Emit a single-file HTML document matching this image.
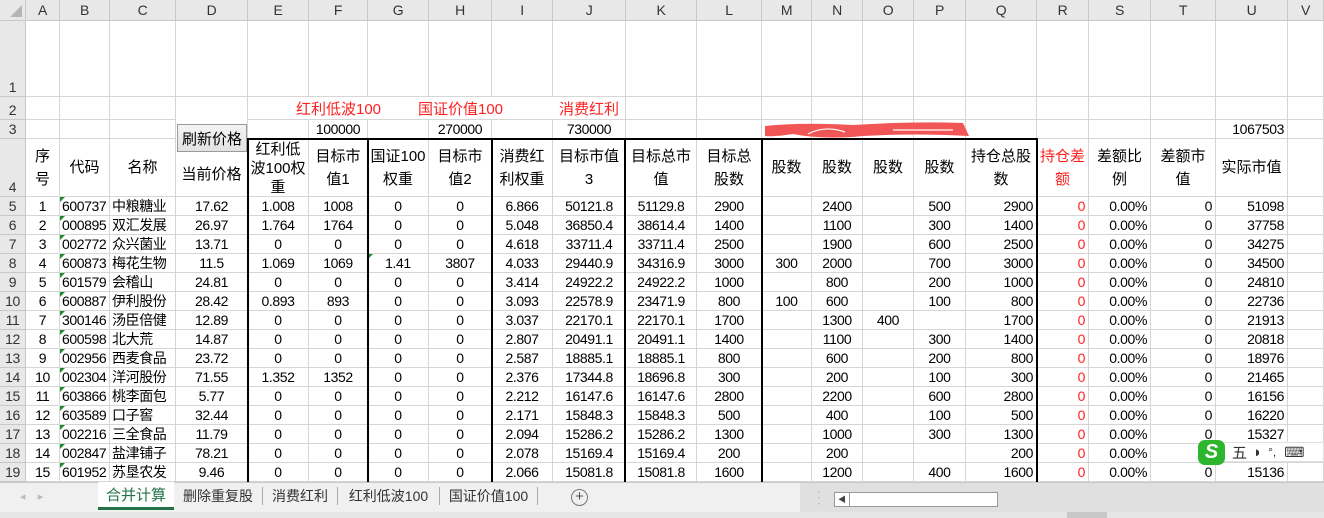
<!DOCTYPE html>
<html><head><meta charset="utf-8"><style>
*{box-sizing:border-box;margin:0;padding:0}
body{width:1324px;height:518px;overflow:hidden;background:#fff;font-family:"Liberation Sans","Noto Sans CJK SC",sans-serif;font-size:14px;color:#000;position:relative}
.g{display:grid;grid-template-columns:26px 34px 50px 66px 72px 61px 59px 61px 63px 61px 73px 71px 65px 50px 51px 51px 52px 71px 52px 62px 65px 72px 36px;grid-template-rows:21px 76px 23px 19px 58px repeat(15,19px);position:absolute;left:0;top:0}
.g>div{border-right:1px solid #d6d6d6;border-bottom:1px solid #d6d6d6;display:flex;align-items:center;justify-content:center;white-space:nowrap;overflow:hidden;letter-spacing:-0.4px;position:relative}
.g>div.ch{background:#e8e8e8;border-color:#c8c8c8;color:#333;font-size:14px}
.g>div.rh{background:#e8e8e8;border-color:#c8c8c8;color:#333;align-items:flex-end;padding-bottom:1px}
.g>div.l{justify-content:flex-start;padding-left:2px}
.g>div.r{justify-content:flex-end;padding-right:3px}
.red{color:#ff2020}
.g>div.w{text-align:center;line-height:23px;font-size:15px;letter-spacing:0}
.g>div.b{align-items:flex-end;padding-bottom:0px;font-size:15px;letter-spacing:0}
.tri:before{content:"";position:absolute;left:0;top:0;border-top:5px solid #1e8a2e;border-right:5px solid transparent}
.tk{position:absolute;background:#000}
</style></head><body>
<div class="g">
<div class="ch" style="background:#e8e8e8"><svg width="12" height="12" style="position:absolute;right:3px;bottom:3px"><path d="M12 0V12H0Z" fill="#b5b5b5"/></svg></div><div class="ch">A</div><div class="ch">B</div><div class="ch">C</div><div class="ch">D</div><div class="ch">E</div><div class="ch">F</div><div class="ch">G</div><div class="ch">H</div><div class="ch">I</div><div class="ch">J</div><div class="ch">K</div><div class="ch">L</div><div class="ch">M</div><div class="ch">N</div><div class="ch">O</div><div class="ch">P</div><div class="ch">Q</div><div class="ch">R</div><div class="ch">S</div><div class="ch">T</div><div class="ch">U</div><div class="ch">V</div>

<div class="rh">1</div><div></div><div></div><div></div><div></div><div></div><div></div><div></div><div></div><div></div><div></div><div></div><div></div><div></div><div></div><div></div><div></div><div></div><div></div><div></div><div></div><div></div><div></div>

<div class="rh">2</div><div></div><div></div><div></div><div style="border-bottom:none"></div><div style="border-right:none"></div><div class="red b" style="overflow:visible;border-right:none">红利低波100</div><div style="border-right:none"></div><div class="red b" style="overflow:visible;border-right:none">国证价值100</div><div style="border-right:none"></div><div class="red b">消费红利</div><div></div><div></div><div></div><div></div><div></div><div></div><div></div><div></div><div></div><div></div><div></div><div></div>

<div class="rh">3</div><div></div><div></div><div></div><div style="border-bottom:none"></div><div></div><div>100000</div><div></div><div>270000</div><div></div><div>730000</div><div></div><div></div><div></div><div></div><div></div><div></div><div></div><div></div><div></div><div></div><div class="r">1067503</div><div></div>

<div class="rh">4</div><div class="w">序<br>号</div><div class="w">代码</div><div class="w">名称</div><div class="w" style="padding-top:14px">当前价格</div><div class="w" style="line-height:19px;padding-top:2px">红利低<br>波100权<br>重</div><div class="w">目标市<br>值1</div><div class="w">国证100<br>权重</div><div class="w">目标市<br>值2</div><div class="w">消费红<br>利权重</div><div class="w">目标市值<br>3</div><div class="w">目标总市<br>值</div><div class="w">目标总<br>股数</div><div class="w">股数</div><div class="w">股数</div><div class="w">股数</div><div class="w">股数</div><div class="w">持仓总股<br>数</div><div class="w red">持仓差<br>额</div><div class="w">差额比<br>例</div><div class="w">差额市<br>值</div><div class="w">实际市值</div><div></div>

<div class="rh">5</div><div>1</div><div class="l tri">600737</div><div class="l">中粮糖业</div><div>17.62</div><div>1.008</div><div>1008</div><div>0</div><div>0</div><div>6.866</div><div>50121.8</div><div>51129.8</div><div>2900</div><div></div><div>2400</div><div></div><div>500</div><div class="r">2900</div><div class="r red">0</div><div class="r">0.00%</div><div class="r">0</div><div class="r">51098</div><div></div>
<div class="rh">6</div><div>2</div><div class="l tri">000895</div><div class="l">双汇发展</div><div>26.97</div><div>1.764</div><div>1764</div><div>0</div><div>0</div><div>5.048</div><div>36850.4</div><div>38614.4</div><div>1400</div><div></div><div>1100</div><div></div><div>300</div><div class="r">1400</div><div class="r red">0</div><div class="r">0.00%</div><div class="r">0</div><div class="r">37758</div><div></div>
<div class="rh">7</div><div>3</div><div class="l tri">002772</div><div class="l">众兴菌业</div><div>13.71</div><div>0</div><div>0</div><div>0</div><div>0</div><div>4.618</div><div>33711.4</div><div>33711.4</div><div>2500</div><div></div><div>1900</div><div></div><div>600</div><div class="r">2500</div><div class="r red">0</div><div class="r">0.00%</div><div class="r">0</div><div class="r">34275</div><div></div>
<div class="rh">8</div><div>4</div><div class="l tri">600873</div><div class="l">梅花生物</div><div>11.5</div><div>1.069</div><div>1069</div><div class="tri">1.41</div><div>3807</div><div>4.033</div><div>29440.9</div><div>34316.9</div><div>3000</div><div>300</div><div>2000</div><div></div><div>700</div><div class="r">3000</div><div class="r red">0</div><div class="r">0.00%</div><div class="r">0</div><div class="r">34500</div><div></div>
<div class="rh">9</div><div>5</div><div class="l tri">601579</div><div class="l">会稽山</div><div>24.81</div><div>0</div><div>0</div><div>0</div><div>0</div><div>3.414</div><div>24922.2</div><div>24922.2</div><div>1000</div><div></div><div>800</div><div></div><div>200</div><div class="r">1000</div><div class="r red">0</div><div class="r">0.00%</div><div class="r">0</div><div class="r">24810</div><div></div>
<div class="rh">10</div><div>6</div><div class="l tri">600887</div><div class="l">伊利股份</div><div>28.42</div><div>0.893</div><div>893</div><div>0</div><div>0</div><div>3.093</div><div>22578.9</div><div>23471.9</div><div>800</div><div>100</div><div>600</div><div></div><div>100</div><div class="r">800</div><div class="r red">0</div><div class="r">0.00%</div><div class="r">0</div><div class="r">22736</div><div></div>
<div class="rh">11</div><div>7</div><div class="l tri">300146</div><div class="l">汤臣倍健</div><div>12.89</div><div>0</div><div>0</div><div>0</div><div>0</div><div>3.037</div><div>22170.1</div><div>22170.1</div><div>1700</div><div></div><div>1300</div><div>400</div><div></div><div class="r">1700</div><div class="r red">0</div><div class="r">0.00%</div><div class="r">0</div><div class="r">21913</div><div></div>
<div class="rh">12</div><div>8</div><div class="l tri">600598</div><div class="l">北大荒</div><div>14.87</div><div>0</div><div>0</div><div>0</div><div>0</div><div>2.807</div><div>20491.1</div><div>20491.1</div><div>1400</div><div></div><div>1100</div><div></div><div>300</div><div class="r">1400</div><div class="r red">0</div><div class="r">0.00%</div><div class="r">0</div><div class="r">20818</div><div></div>
<div class="rh">13</div><div>9</div><div class="l tri">002956</div><div class="l">西麦食品</div><div>23.72</div><div>0</div><div>0</div><div>0</div><div>0</div><div>2.587</div><div>18885.1</div><div>18885.1</div><div>800</div><div></div><div>600</div><div></div><div>200</div><div class="r">800</div><div class="r red">0</div><div class="r">0.00%</div><div class="r">0</div><div class="r">18976</div><div></div>
<div class="rh">14</div><div>10</div><div class="l tri">002304</div><div class="l">洋河股份</div><div>71.55</div><div>1.352</div><div>1352</div><div>0</div><div>0</div><div>2.376</div><div>17344.8</div><div>18696.8</div><div>300</div><div></div><div>200</div><div></div><div>100</div><div class="r">300</div><div class="r red">0</div><div class="r">0.00%</div><div class="r">0</div><div class="r">21465</div><div></div>
<div class="rh">15</div><div>11</div><div class="l tri">603866</div><div class="l">桃李面包</div><div>5.77</div><div>0</div><div>0</div><div>0</div><div>0</div><div>2.212</div><div>16147.6</div><div>16147.6</div><div>2800</div><div></div><div>2200</div><div></div><div>600</div><div class="r">2800</div><div class="r red">0</div><div class="r">0.00%</div><div class="r">0</div><div class="r">16156</div><div></div>
<div class="rh">16</div><div>12</div><div class="l tri">603589</div><div class="l">口子窖</div><div>32.44</div><div>0</div><div>0</div><div>0</div><div>0</div><div>2.171</div><div>15848.3</div><div>15848.3</div><div>500</div><div></div><div>400</div><div></div><div>100</div><div class="r">500</div><div class="r red">0</div><div class="r">0.00%</div><div class="r">0</div><div class="r">16220</div><div></div>
<div class="rh">17</div><div>13</div><div class="l tri">002216</div><div class="l">三全食品</div><div>11.79</div><div>0</div><div>0</div><div>0</div><div>0</div><div>2.094</div><div>15286.2</div><div>15286.2</div><div>1300</div><div></div><div>1000</div><div></div><div>300</div><div class="r">1300</div><div class="r red">0</div><div class="r">0.00%</div><div class="r">0</div><div class="r">15327</div><div></div>
<div class="rh">18</div><div>14</div><div class="l tri">002847</div><div class="l">盐津铺子</div><div>78.21</div><div>0</div><div>0</div><div>0</div><div>0</div><div>2.078</div><div>15169.4</div><div>15169.4</div><div>200</div><div></div><div>200</div><div></div><div></div><div class="r">200</div><div class="r red">0</div><div class="r">0.00%</div><div class="r"></div><div class="r"></div><div></div>
<div class="rh">19</div><div>15</div><div class="l tri">601952</div><div class="l">苏垦农发</div><div>9.46</div><div>0</div><div>0</div><div>0</div><div>0</div><div>2.066</div><div>15081.8</div><div>15081.8</div><div>1600</div><div></div><div>1200</div><div></div><div>400</div><div class="r">1600</div><div class="r red">0</div><div class="r">0.00%</div><div class="r">0</div><div class="r">15136</div><div></div>
</div>

<div style="position:absolute;left:177px;top:124px;width:70px;height:28px;background:linear-gradient(#f4f4f4,#e2e2e2);border:1px solid #9a9a9a;display:flex;align-items:center;justify-content:center;font-size:15px">刷新价格</div>

<div class="tk" style="left:247px;top:138px;width:791px;height:2px"></div>
<div class="tk" style="left:247px;top:138px;width:2px;height:344px"></div>
<div class="tk" style="left:367px;top:138px;width:2px;height:344px"></div>
<div class="tk" style="left:491px;top:138px;width:2px;height:344px"></div>
<div class="tk" style="left:624px;top:138px;width:2px;height:344px"></div>
<div class="tk" style="left:761px;top:138px;width:2px;height:344px"></div>
<div class="tk" style="left:1036px;top:138px;width:2px;height:344px"></div>

<svg style="position:absolute;left:763px;top:120px" width="210" height="20"><path d="M2 6 Q40 2 90 5 Q150 1 200 3 L206 16 Q150 13 100 16 Q60 20 30 14 Q10 17 2 16Z" fill="#f25555"/><path d="M45 14 Q62 5 82 12 M130 10 L190 10" stroke="#fff" stroke-width="1.2" fill="none"/></svg>

<div style="position:absolute;left:0;top:482px;width:1324px;height:30px;background:#f0f0f0;border-top:1px solid #c8c8c8"></div>
<div style="position:absolute;left:20px;top:490px;color:#bbb;font-size:11px">◂&nbsp;&nbsp;&nbsp;&nbsp;▸</div>
<div style="position:absolute;left:98px;top:482px;width:76px;height:28px;background:#fff;border-bottom:3px solid #217346;color:#217346;display:flex;align-items:center;justify-content:center;font-size:15px">合并计算</div>
<div style="position:absolute;left:174px;top:487px;height:18px;display:flex;font-size:14px;color:#333;line-height:18px">
<span style="width:89px;text-align:center;border-right:1px solid #aaa">删除重复股</span><span style="width:75px;text-align:center;border-right:1px solid #aaa">消费红利</span><span style="width:102px;text-align:center;border-right:1px solid #aaa">红利低波100</span><span style="width:98px;text-align:center;border-right:1px solid #aaa">国证价值100</span></div>
<div style="position:absolute;left:571px;top:489px;width:17px;height:17px;border:1px solid #777;border-radius:50%;color:#555;font-size:15px;line-height:14px;text-align:center">+</div>
<div style="position:absolute;left:800px;top:483px;width:524px;height:29px;background:#e0e0e0"></div>
<div style="position:absolute;left:817px;top:488px;color:#aaa;font-size:12px;line-height:6px">·<br>·<br>·</div>
<div style="position:absolute;left:834px;top:492px;width:164px;height:15px;background:#fff;border:1px solid #999"><div style="width:15px;height:13px;border-right:1px solid #999;font-size:8px;text-align:center;line-height:13px;color:#444">◀</div></div>
<div style="position:absolute;left:0;top:512px;width:1324px;height:6px;background:#e6e6e6"></div>
<div style="position:absolute;left:1067px;top:512px;width:40px;height:6px;background:#c8c8c8"></div>

<div style="position:absolute;left:1213px;top:442px;width:111px;height:20px;background:#fff;border:1px solid #e0e0e0;display:flex;align-items:center;font-size:15px;color:#333">
<span style="margin-left:18px">五</span><span style="margin-left:6px">◗</span><span style="margin-left:6px;font-size:12px">°,</span><span style="margin-left:8px;font-size:14px">⌨</span></div>
<div style="position:absolute;left:1198px;top:440px;width:27px;height:25px;background:#2db52d;border-radius:7px;color:#fff;font-weight:bold;font-size:20px;text-align:center;line-height:24px;font-style:italic">S</div>
</body></html>
